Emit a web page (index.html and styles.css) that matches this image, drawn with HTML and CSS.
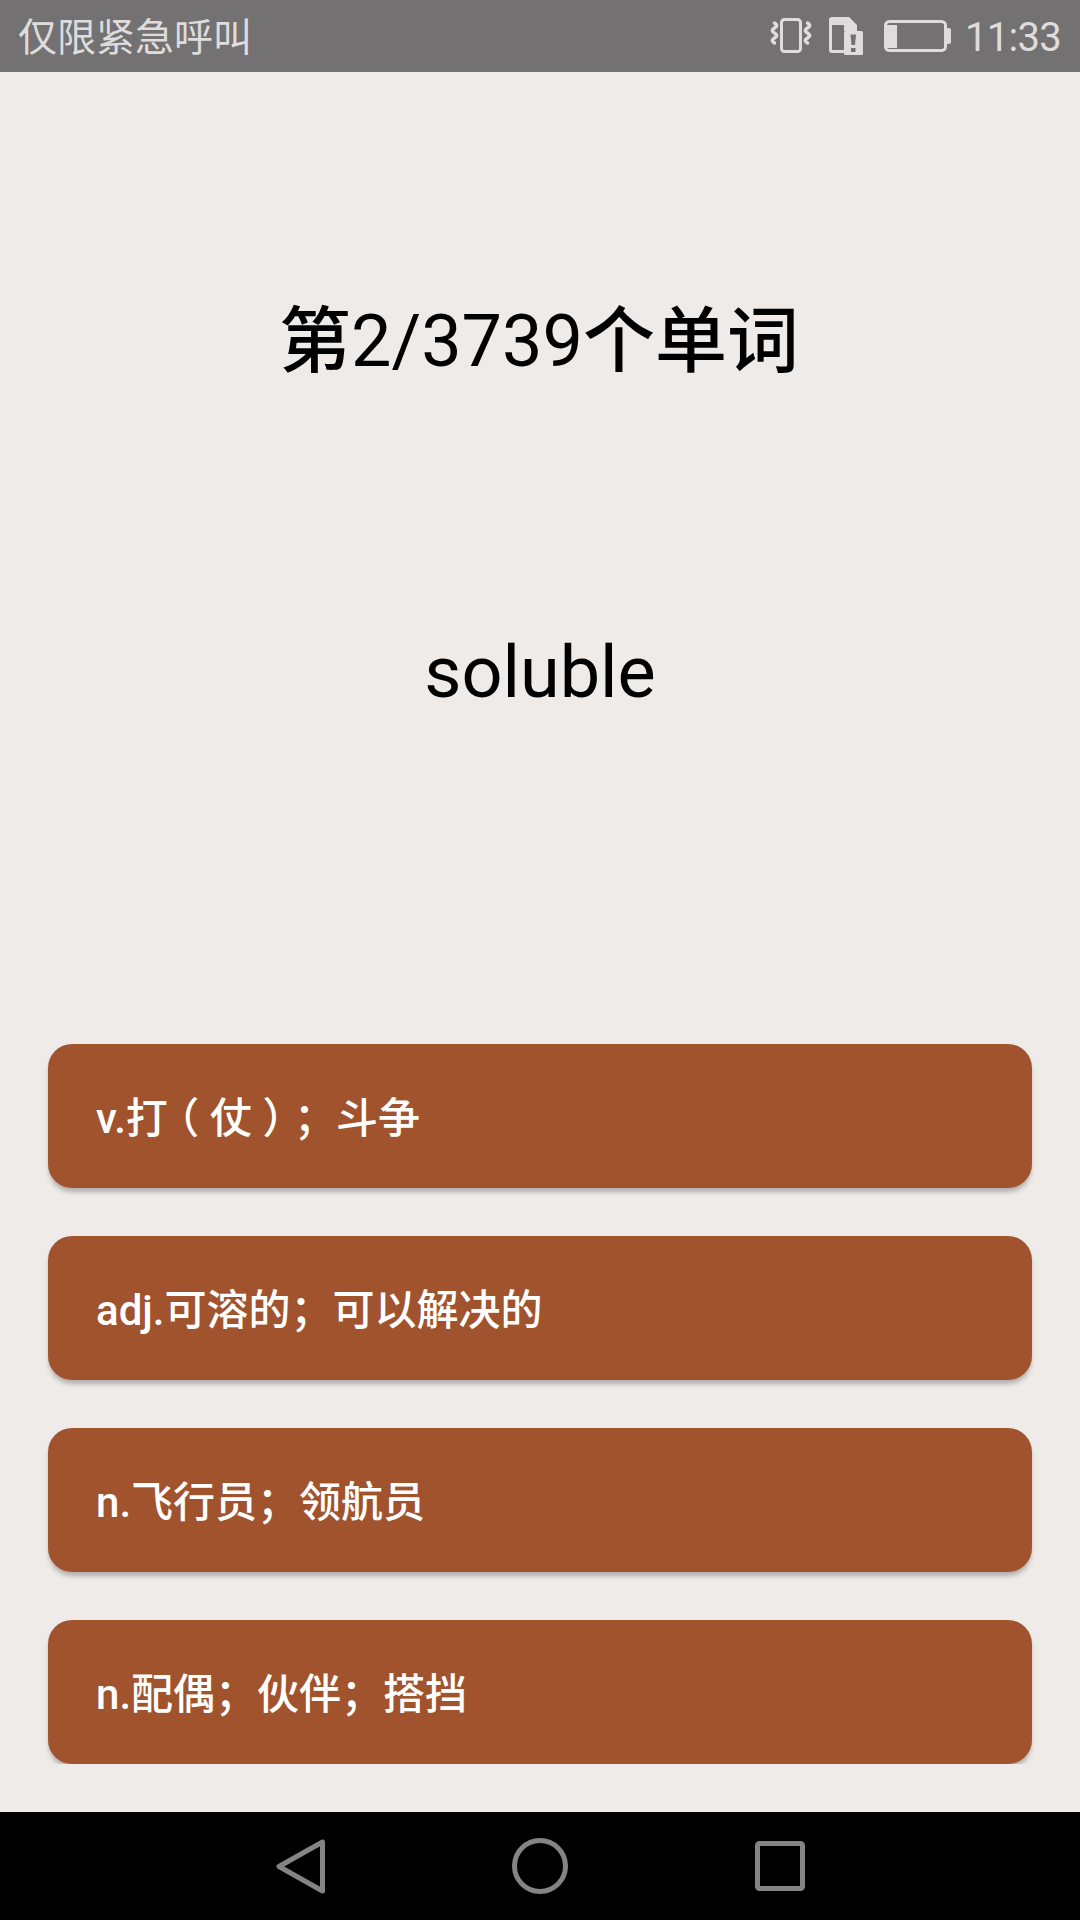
FILE: index.html
```html
<!DOCTYPE html>
<html lang="zh-CN">
<head>
<meta charset="utf-8">
<title>单词</title>
<link rel="stylesheet" href="styles.css">
</head>
<body>
<div class="screen">
  <header class="status">
    <span class="status-text">仅限紧急呼叫</span>
    <div class="status-right">
      <svg class="ic-vib" width="42" height="36" viewBox="0 0 42 36"><rect x="11.500" y="1.500" width="19" height="32" rx="3" fill="none" stroke="#dedcdc" stroke-width="3"/><path d="M4.500 5c3 2 3 3 0 5s-3 3 0 5 3 3 0 5-3 3 0 5M37.500 5c3 2 3 3 0 5s-3 3 0 5 3 3 0 5-3 3 0 5" fill="none" stroke="#dedcdc" stroke-width="3.500" stroke-linecap="round"/></svg>
      <svg class="ic-sim" width="34" height="38" viewBox="0 0 34 38"><path fill-rule="evenodd" d="M3 0h17l8 8v6H15v22H3a3 3 0 0 1-3-3V3a3 3 0 0 1 3-3zM3 8v25h12V8z" fill="#dedcdc"/><rect x="15" y="14" width="19" height="24" rx="1.500" fill="#dedcdc"/><path d="M21.500 17.500h5.500l-1 10.500h-3.500z" fill="#737172"/><rect x="22" y="31" width="4.500" height="4" fill="#737172"/></svg>
      <svg class="ic-bat" width="67" height="33" viewBox="0 0 67 33"><rect x="1.500" y="1.500" width="60" height="29" rx="4" fill="none" stroke="#dedcdc" stroke-width="3"/><rect x="3" y="5" width="10" height="23" fill="#dedcdc"/><path d="M63 8h2a2 2 0 0 1 2 2v12a2 2 0 0 1-2 2h-2z" fill="#dedcdc"/></svg>
      <span class="status-time">11:33</span>
    </div>
  </header>
  <main class="content">
    <h1 class="title"><span class="cjk">第</span>2/3739<span class="cjk">个单词</span></h1>
    <p class="word">soluble</p>
    <ul class="options">
      <li class="option">v.打<span class="paren">（</span>仗<span class="paren">）</span>；斗争</li>
      <li class="option">adj.可溶的；可以解决的</li>
      <li class="option">n.飞行员；领航员</li>
      <li class="option">n.配偶；伙伴；搭挡</li>
    </ul>
  </main>
  <nav class="nav">
    <svg width="50" height="55" viewBox="0 0 50 55"><path d="M3 27.500 46.500 3v49z" fill="none" stroke="#848484" stroke-width="5" stroke-linejoin="round"/></svg>
    <svg width="56" height="56" viewBox="0 0 56 56"><circle cx="28" cy="28" r="25.500" fill="none" stroke="#848484" stroke-width="5"/></svg>
    <svg width="50" height="50" viewBox="0 0 50 50"><rect x="2.500" y="2.500" width="45" height="45" rx="2" fill="none" stroke="#848484" stroke-width="5"/></svg>
  </nav>
</div>
</body>
</html>
```
FILE: styles.css
```css
* { box-sizing: border-box; }
html, body { margin: 0; padding: 0; }
body { font-family: Roboto, "Noto Sans CJK SC", sans-serif; background: #eeebe8; }
.screen { width: 1080px; height: 1920px; display: flex; flex-direction: column; overflow: hidden; }
.status { height: 72px; flex: none; background: #737172; display: flex; align-items: center; justify-content: space-between; padding: 0 19px 0 18px; color: #dedcdc; }
.status-text { font-size: 39px; font-weight: 400; line-height: 72px; padding-top: 4px; }
.status-right { display: flex; align-items: center; }
.ic-vib { margin-right: 17px; }
.ic-sim { margin-right: 21px; }
.ic-bat { margin-right: 14px; }
.status-time { font-size: 40px; line-height: 72px; letter-spacing: -.7px; padding-top: 3px; }
.content { flex: 1; display: flex; flex-direction: column; align-items: center; color: #000; }
.title { margin: 218px 0 0; padding-right: 2px; font-size: 72px; font-weight: 400; line-height: 104px; text-align: center; }
.cjk { font-weight: 500; }
.word { margin: 227px 0 0; font-size: 72px; line-height: 104px; text-align: center; }
.options { margin: auto 0 48px; padding: 0 48px; width: 100%; list-style: none; display: flex; flex-direction: column; gap: 48px; overflow: hidden; }
.option { height: 144px; flex: none; border-radius: 24px; background: #a0532d; color: #fff; font-size: 42px; font-weight: 500; line-height: 144px; padding: 3px 0 0 48px; box-shadow: 0 5px 5px -1px rgba(0,0,0,.26); text-spacing-trim: space-all; }
.paren { font-feature-settings: "halt"; margin: 0 10.500px; }
.nav { height: 108px; flex: none; background: #000; display: flex; align-items: center; }
.nav svg:nth-child(1) { margin-left: 276px; }
.nav svg:nth-child(2) { margin-left: 186px; }
.nav svg:nth-child(3) { margin-left: 187px; }
```
